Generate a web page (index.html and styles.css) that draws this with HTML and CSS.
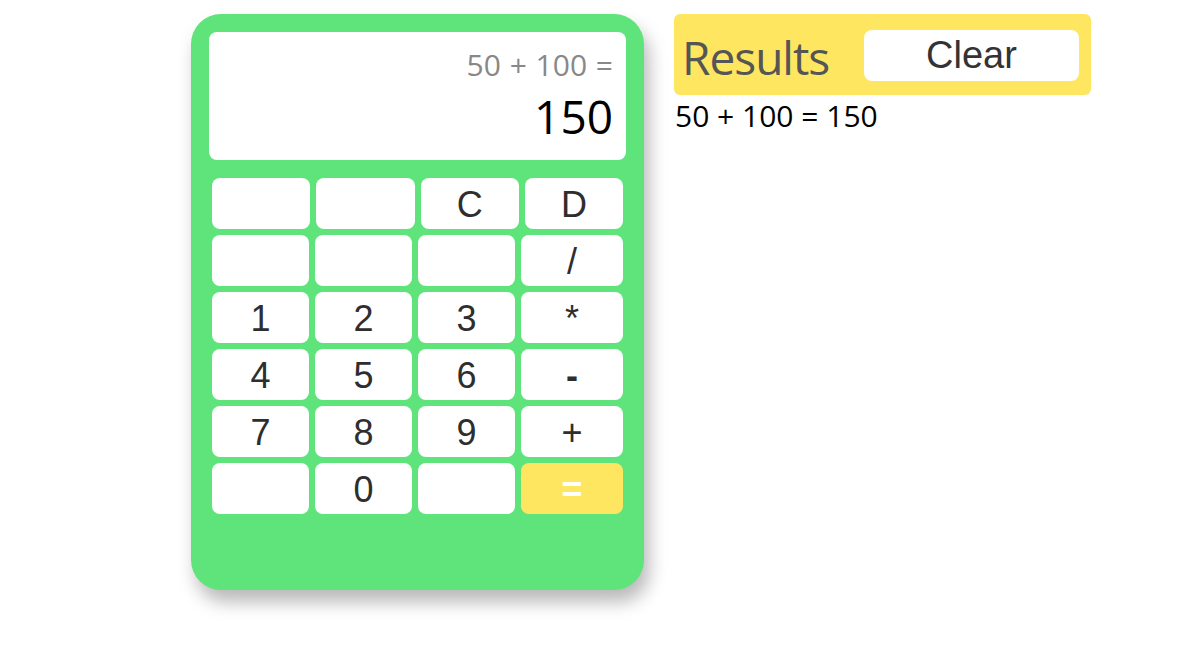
FILE: index.html
```html
<!DOCTYPE html>
<html lang="en">
<head>
<meta charset="utf-8">
<title>Calculator</title>
<link rel="stylesheet" href="styles.css">
</head>
<body>
<div class="page">
  <div class="calculator">
    <div class="display">
      <div class="expression">50 + 100 =</div>
      <div class="value">150</div>
    </div>
    <div class="keys">
      <div class="row">
        <button class="key"></button>
        <button class="key"></button>
        <button class="key">C</button>
        <button class="key">D</button>
      </div>
      <div class="row">
        <button class="key"></button>
        <button class="key"></button>
        <button class="key"></button>
        <button class="key op">/</button>
      </div>
      <div class="row">
        <button class="key">1</button>
        <button class="key">2</button>
        <button class="key">3</button>
        <button class="key op">*</button>
      </div>
      <div class="row">
        <button class="key">4</button>
        <button class="key">5</button>
        <button class="key">6</button>
        <button class="key op minus">-</button>
      </div>
      <div class="row">
        <button class="key">7</button>
        <button class="key">8</button>
        <button class="key">9</button>
        <button class="key op">+</button>
      </div>
      <div class="row">
        <button class="key"></button>
        <button class="key">0</button>
        <button class="key"></button>
        <button class="key op equals">=</button>
      </div>
    </div>
  </div>
  <div class="results">
    <div class="results-head">
      <h2 class="results-title">Results</h2>
      <button class="clear">Clear</button>
    </div>
    <div class="results-list">
      <div class="result-item">50 + 100 = 150</div>
    </div>
  </div>
</div>
</body>
</html>
```
FILE: styles.css
```css
html, body {
  margin: 0;
  padding: 0;
  background: #ffffff;
}

body {
  font-family: "Open Sans", "Noto Sans", sans-serif;
}

.page {
  display: flex;
  align-items: flex-start;
  gap: 30px;
  padding: 14px 0 40px 191px;
}

.calculator {
  box-sizing: border-box;
  width: 453px;
  height: 576px;
  padding: 18px;
  background: #5ee47b;
  border-radius: 30px;
  box-shadow: 5px 12px 18px rgba(0, 0, 0, 0.28);
}

.display {
  box-sizing: border-box;
  height: 128px;
  padding: 12px 13px 0 13px;
  background: #ffffff;
  border-radius: 8px;
  text-align: right;
}

.expression {
  font-size: 30px;
  line-height: 41px;
  color: #888888;
  word-spacing: 1px;
}

.value {
  font-size: 46px;
  line-height: 63px;
  color: #000000;
}

.keys {
  display: flex;
  flex-direction: column;
  gap: 6px;
  margin: 18px 3px 0 3px;
}

.row {
  display: flex;
  gap: 6px;
}

.key {
  flex: 1 1 0;
  min-width: 0;
  height: 51px;
  padding: 0;
  border: none;
  border-radius: 8px;
  background: #ffffff;
  font-family: "Liberation Sans", Arial, sans-serif;
  font-size: 36px;
  line-height: 53px;
  color: #2e2e2e;
}

.row + .row .op {
  flex: 0 0 102px;
}

.minus {
  font-weight: bold;
}

.equals {
  background: #fee660;
  color: #ffffff;
  font-weight: bold;
}

.results {
  width: 417px;
}

.results-head {
  display: flex;
  justify-content: space-between;
  align-items: flex-start;
  box-sizing: border-box;
  height: 81px;
  padding: 0 12px 0 8px;
  background: #fee660;
  border-radius: 6px;
}

.results-title {
  margin: 11px 0 0 0;
  font-size: 46px;
  line-height: 64px;
  font-weight: normal;
  letter-spacing: -1px;
  color: #555555;
}

.clear {
  width: 215px;
  height: 51px;
  margin-top: 16px;
  padding: 0;
  border: none;
  border-radius: 8px;
  background: #ffffff;
  font-family: "Liberation Sans", Arial, sans-serif;
  font-size: 38px;
  line-height: 51px;
  color: #333333;
}

.results-list {
  padding-left: 1px;
}

.result-item {
  font-size: 30px;
  line-height: 41px;
  color: #000000;
}
```
